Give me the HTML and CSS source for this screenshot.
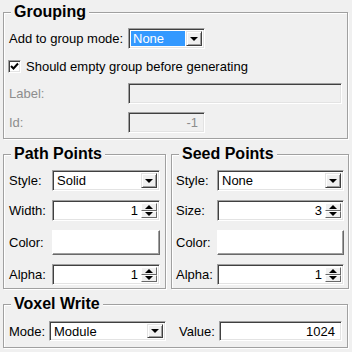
FILE: index.html
```html
<!DOCTYPE html>
<html lang="en">
<head>
    <meta charset="UTF-8">
    <title>Settings</title>
    <link rel="stylesheet" href="styles.css">
</head>
<body>
    <div class="panel">

        <!-- Grouping -->
        <section class="group grouping">
            <h2 class="group-title">Grouping</h2>
            <div class="grouping-grid">
                <span class="lbl">Add to group mode:</span>
                <div class="combo combo-short">
                    <span class="combo-value selected">None</span>
                    <span class="drop-btn"><i class="tri-down"></i></span>
                </div>

                <label class="check-row">
                    <span class="checkbox">
                        <svg width="9" height="9" viewBox="0 0 9 9"><path d="M1 4 L3.5 6.5 L8 1.5" fill="none" stroke="#000" stroke-width="2"/></svg>
                    </span>
                    Should empty group before generating
                </label>

                <span class="lbl disabled">Label:</span>
                <div class="field off"></div>

                <span class="lbl disabled">Id:</span>
                <div class="field off short num">-1</div>
            </div>
        </section>

        <div class="pair">
            <!-- Path Points -->
            <section class="group path">
                <h2 class="group-title">Path Points</h2>
                <div class="props">
                    <span class="lbl">Style:</span>
                    <div class="combo">
                        <span class="combo-value">Solid</span>
                        <span class="drop-btn"><i class="tri-down"></i></span>
                    </div>

                    <span class="lbl">Width:</span>
                    <div class="field spin">
                        <span class="spin-value">1</span>
                        <span class="spin-btns"><span class="sbtn"><i class="tri-up"></i></span><span class="sbtn"><i class="tri-down"></i></span></span>
                    </div>

                    <span class="lbl">Color:</span>
                    <div class="color-btn"></div>

                    <span class="lbl">Alpha:</span>
                    <div class="field spin">
                        <span class="spin-value">1</span>
                        <span class="spin-btns"><span class="sbtn"><i class="tri-up"></i></span><span class="sbtn"><i class="tri-down"></i></span></span>
                    </div>
                </div>
            </section>

            <!-- Seed Points -->
            <section class="group seed">
                <h2 class="group-title">Seed Points</h2>
                <div class="props">
                    <span class="lbl">Style:</span>
                    <div class="combo">
                        <span class="combo-value">None</span>
                        <span class="drop-btn"><i class="tri-down"></i></span>
                    </div>

                    <span class="lbl">Size:</span>
                    <div class="field spin">
                        <span class="spin-value">3</span>
                        <span class="spin-btns"><span class="sbtn"><i class="tri-up"></i></span><span class="sbtn"><i class="tri-down"></i></span></span>
                    </div>

                    <span class="lbl">Color:</span>
                    <div class="color-btn"></div>

                    <span class="lbl">Alpha:</span>
                    <div class="field spin">
                        <span class="spin-value">1</span>
                        <span class="spin-btns"><span class="sbtn"><i class="tri-up"></i></span><span class="sbtn"><i class="tri-down"></i></span></span>
                    </div>
                </div>
            </section>
        </div>

        <!-- Voxel Write -->
        <section class="group voxel">
            <h2 class="group-title">Voxel Write</h2>
            <div class="voxel-row">
                <span class="lbl mode-lbl">Mode:</span>
                <div class="combo mode-combo">
                    <span class="combo-value">Module</span>
                    <span class="drop-btn"><i class="tri-down"></i></span>
                </div>
                <span class="lbl value-lbl">Value:</span>
                <div class="field num value-field">1024</div>
            </div>
        </section>

    </div>
</body>
</html>
```

FILE: styles.css
```css
body {
    margin: 0;
    padding: 0;
    background-color: #f0f0f0;
    font-family: "Liberation Sans", Arial, sans-serif;
    font-size: 13px;
    color: #000;
}

.panel {
    width: 352px;
    height: 352px;
    overflow: hidden;
}

/* group boxes */
.group {
    border: 1px solid #a0a0a0;
    box-shadow: inset 1px 1px 0 #fff, 1px 1px 0 #fff;
}

.group-title {
    margin: -10px 0 0 2px;
    padding: 0 3px;
    width: fit-content;
    background-color: #f0f0f0;
    font-size: 16px;
    line-height: 18px;
    font-weight: bold;
}

.grouping {
    margin: 12px 4px 0 3px;
    padding: 0 5px 5px 5px;
}

.grouping-grid {
    display: grid;
    grid-template-columns: 119px 1fr;
    grid-template-rows: 21px 18px 21px 21px;
    row-gap: 8px;
    align-items: center;
    padding-top: 7px;
}

.lbl {
    white-space: nowrap;
}

.disabled {
    color: #8d8d8d;
}

.check-row {
    grid-column: 1 / 3;
    display: flex;
    align-items: center;
    gap: 5px;
    margin-left: -1px;
}

.checkbox {
    width: 13px;
    height: 13px;
    box-sizing: border-box;
    border-style: solid;
    border-width: 1px;
    border-color: #a0a0a0 #fff #fff #a0a0a0;
    box-shadow: inset 1px 1px 0 #404040, inset -1px -1px 0 #e3e3e3;
    background: #fff;
    display: flex;
    align-items: center;
    justify-content: center;
}

/* sunken boxes */
.field, .combo {
    box-sizing: border-box;
    height: 21px;
    border-style: solid;
    border-width: 1px;
    border-color: #a0a0a0 #fff #fff #a0a0a0;
    box-shadow: inset 1px 1px 0 #404040, inset -1px -1px 0 #e3e3e3;
    background-color: #fff;
}

.field.off {
    background-color: #f0f0f0;
}

.field.short, .combo-short {
    width: 77px;
}

.num {
    display: flex;
    align-items: center;
    justify-content: flex-end;
    padding-right: 6px;
}

.field.off.num {
    color: #8d8d8d;
}

.combo {
    display: flex;
    align-items: stretch;
    padding: 2px;
}

.combo-value {
    flex: 1;
    display: flex;
    align-items: center;
    padding-left: 2px;
}

.combo-value.selected {
    background-color: #3399ff;
    color: #fff;
    margin-right: 1px;
}

.drop-btn {
    width: 16px;
    box-sizing: border-box;
    background-color: #f0f0f0;
    border-style: solid;
    border-width: 1px;
    border-color: #e3e3e3 #404040 #404040 #e3e3e3;
    box-shadow: inset 1px 1px 0 #fff, inset -1px -1px 0 #a0a0a0;
    display: flex;
    align-items: center;
    justify-content: center;
}

.tri-down, .tri-up {
    width: 0;
    height: 0;
    border-left: 4px solid transparent;
    border-right: 4px solid transparent;
}

.tri-down {
    border-top: 4px solid #000;
}

.tri-up {
    border-bottom: 4px solid #000;
}

/* Path / Seed */
.pair {
    display: flex;
    gap: 5px;
    margin: 15px 3px 0 3px;
}

.path {
    flex: 0 0 163px;
    box-sizing: border-box;
    padding: 0 5px 3px 5px;
}

.seed {
    flex: 1;
    padding: 0 4px 3px 4px;
}

.seed .group-title {
    margin-left: 3px;
}

.props {
    display: grid;
    grid-template-columns: 43px 1fr;
    grid-template-rows: 21px 21px 25px 21px;
    row-gap: 9px;
    align-items: center;
    padding-top: 7px;
}

.seed .props {
    grid-template-columns: 41px 1fr;
}

.props .combo, .props .field {
    height: 21px;
}

.spin {
    display: flex;
    padding: 2px;
}

.spin-value {
    flex: 1;
    display: flex;
    align-items: center;
    justify-content: flex-end;
    padding-right: 3px;
}

.spin-btns {
    width: 16px;
    display: flex;
    flex-direction: column;
}

.sbtn {
    flex: 1;
    box-sizing: border-box;
    background-color: #f0f0f0;
    border-style: solid;
    border-width: 1px;
    border-color: #fff #696969 #696969 #fff;
    display: flex;
    align-items: center;
    justify-content: center;
}

.sbtn .tri-up {
    border-bottom-width: 4px;
}

.sbtn .tri-down {
    border-top-width: 4px;
}

.color-btn {
    height: 25px;
    box-sizing: border-box;
    background-color: #fff;
    border-style: solid;
    border-width: 1px;
    border-color: #fff #696969 #696969 #fff;
    box-shadow: inset -1px -1px 0 #a0a0a0;
}

/* Voxel Write */
.voxel {
    margin: 15px 4px 0 3px;
    padding: 0 5px 6px 5px;
}

.voxel-row {
    display: flex;
    align-items: center;
    padding-top: 8px;
}

.mode-lbl {
    width: 40px;
}

.mode-combo {
    width: 117px;
    height: 20px;
}

.value-lbl {
    width: 40px;
    margin-left: 13px;
}

.value-field {
    flex: 1;
    height: 20px;
}
```
